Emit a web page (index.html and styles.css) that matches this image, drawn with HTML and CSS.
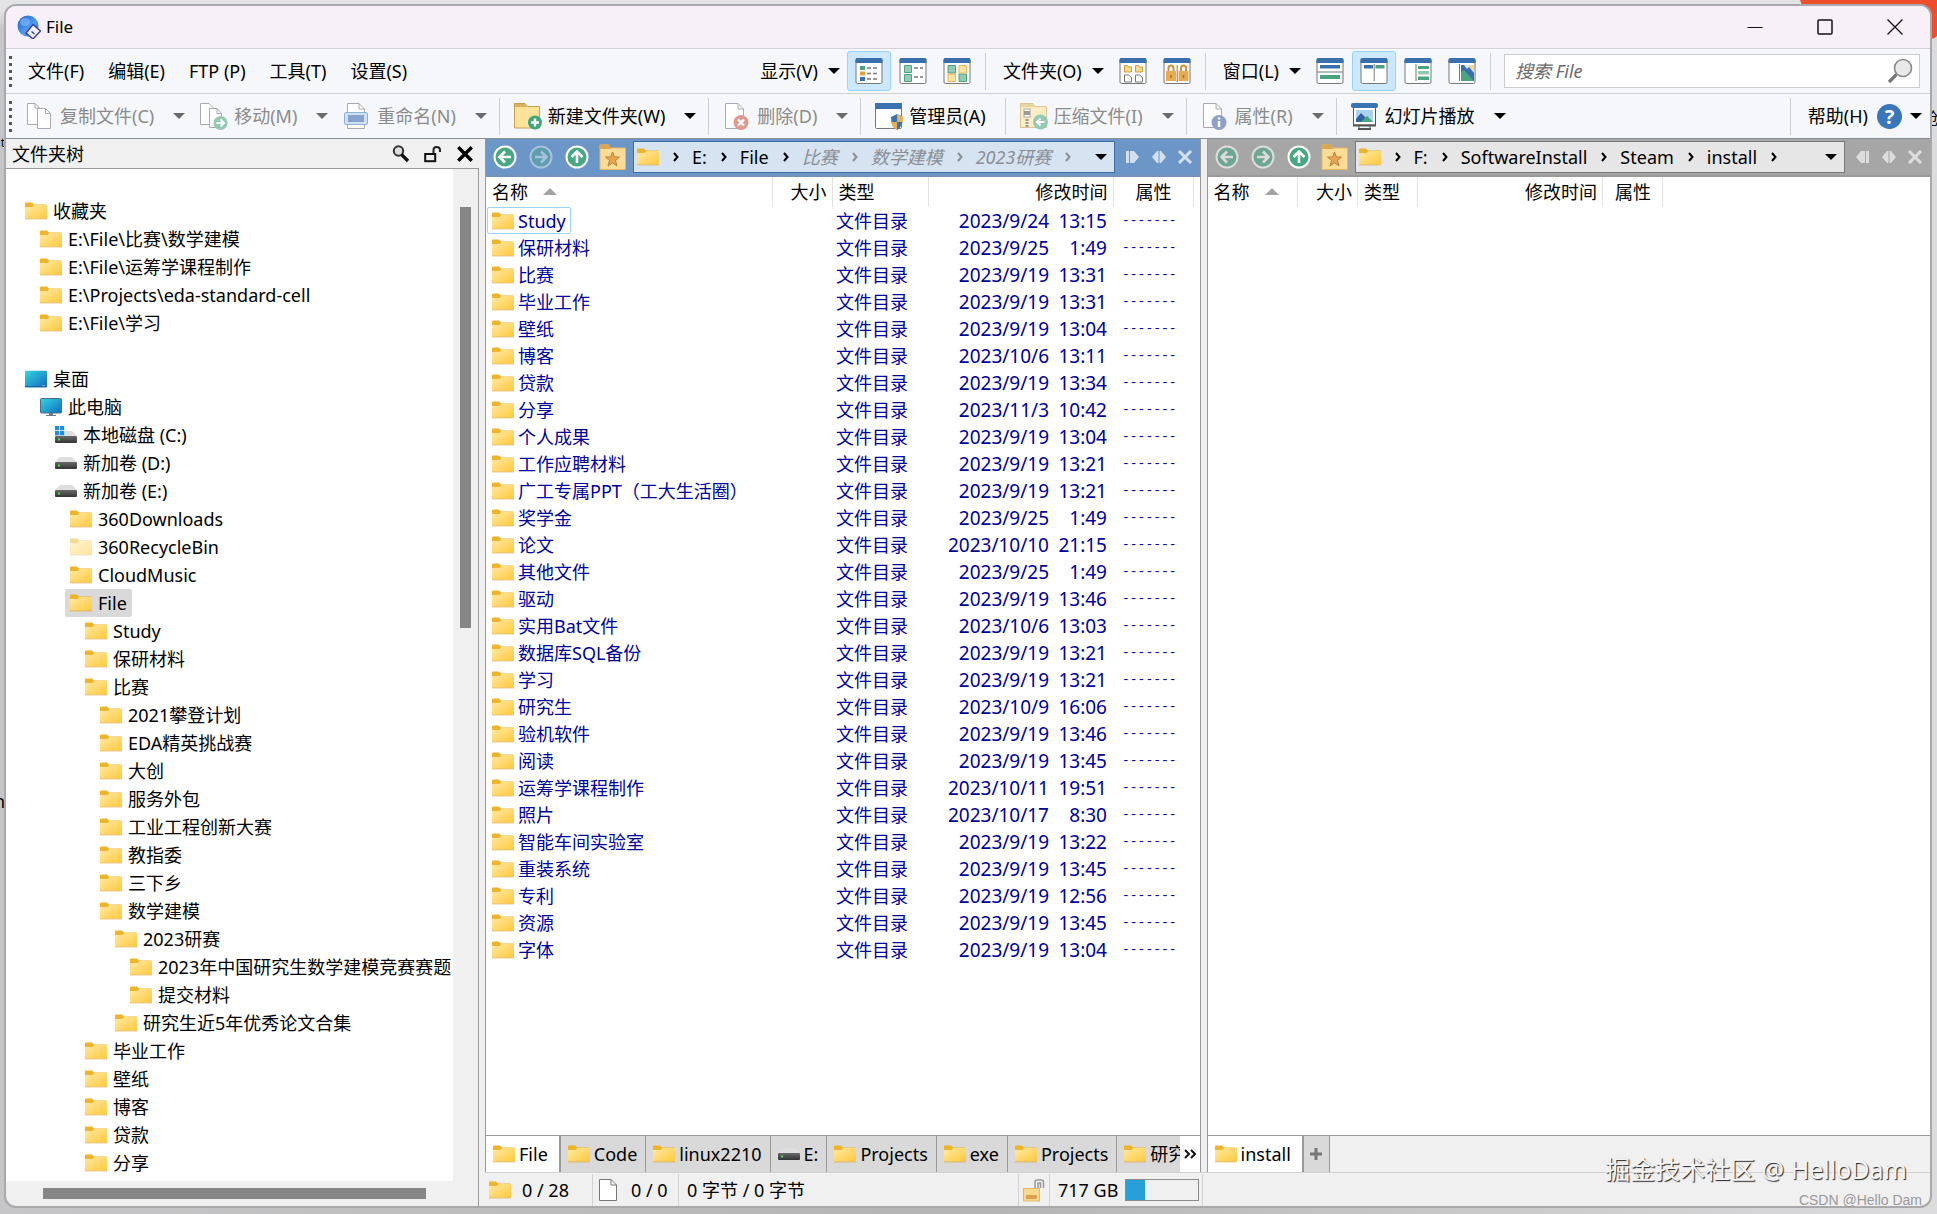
FILE: index.html
```html
<!DOCTYPE html>
<html lang="zh-CN">
<head>
<meta charset="UTF-8">
<meta name="viewport" content="width=device-width, initial-scale=1.0">
<title>File</title>
<link rel="stylesheet" href="styles.css">
</head>
<body>

  <!-- Icon sprites -->
  <svg class="sprites" aria-hidden="true">
    <defs>
      <linearGradient id="gFolder" x1="0" y1="0" x2="1" y2="1">
        <stop offset="0" stop-color="#ffe9a6"/><stop offset="1" stop-color="#ffca3a"/>
      </linearGradient>
      <linearGradient id="gDesk" x1="0" y1="0" x2="1" y2="1">
        <stop offset="0" stop-color="#35d6dc"/><stop offset="1" stop-color="#0f6cc4"/>
      </linearGradient>
      <linearGradient id="gApp" x1="0" y1="0" x2="1" y2="1">
        <stop offset="0" stop-color="#1c5fc4"/><stop offset="0.6" stop-color="#4fa0f0"/><stop offset="1" stop-color="#1b4fb0"/>
      </linearGradient>
      <linearGradient id="gDisk" x1="0" y1="0" x2="0" y2="1">
        <stop offset="0" stop-color="#6a6a6a"/><stop offset="1" stop-color="#333"/>
      </linearGradient>
    </defs>
    <symbol id="folder" viewBox="0 0 22 18">
      <path d="M0 1.5Q0 .5 1 .5H7L9 2.5H21Q22 2.5 22 3.5V8H0Z" fill="#f0b429"/>
      <path d="M0 5H7.5L9.5 3H22V16.5H0Z" fill="url(#gFolder)"/>
      <path d="M0 16.5H22V17.3H0Z" fill="#e3a93a"/>
    </symbol>
    <symbol id="desktop" viewBox="0 0 24 18">
      <rect width="24" height="18" rx="1" fill="url(#gDesk)"/>
      <path d="M0 17H24V18H0Z" fill="#0b4f94"/><path d="M19 16.5h1M21 16.5h1" stroke="#fff"/>
    </symbol>
    <symbol id="computer" viewBox="0 0 22 18">
      <rect x=".5" y=".5" width="21" height="14.5" rx="1" fill="url(#gDesk)" stroke="#4b6f86"/>
      <path d="M9 15h4v2h3v1H6v-1h3z" fill="#6c7a86"/>
    </symbol>
    <symbol id="disk" viewBox="0 0 22 18">
      <path d="M5 3H17L22 8H0Z" fill="#dfdfdf"/>
      <rect y="8" width="22" height="7" rx="1" fill="url(#gDisk)"/>
      <rect x="3" y="10.5" width="2" height="2" fill="#4be04b"/>
    </symbol>
    <symbol id="sysdisk" viewBox="0 0 22 18">
      <path d="M5 5H17L22 10H0Z" fill="#dfdfdf"/>
      <rect y="10" width="22" height="7" rx="1" fill="url(#gDisk)"/>
      <rect x="3" y="12.5" width="2" height="2" fill="#4be04b"/>
      <path d="M0 0h4.200v4.200H0zM5 0h4.200v4.200H5zM0 5h4.200v4.200H0zM5 5h4.200v4.200H5z" fill="#1f8fdb"/>
    </symbol>
    <symbol id="page" viewBox="0 0 18 22">
      <path d="M.5 .5H12L17.500 6V21.500H.5Z" fill="#fff" stroke="#777"/>
      <path d="M12 .5V6H17.500" fill="none" stroke="#777"/>
    </symbol>
    <symbol id="app" viewBox="0 0 24 24">
      <ellipse cx="11" cy="11" rx="10.500" ry="10.500" fill="url(#gApp)"/>
      <ellipse cx="8" cy="7" rx="5" ry="4" fill="#8cc6ff" opacity=".55"/>
      <path d="M16 9.500L23.500 16L16 24L9 18Z" fill="#f2f2ff" stroke="#3c3f9c" stroke-width="1.500"/>
      <path d="M14.500 16.500l3 2.500" stroke="#3c3f9c" stroke-width="1.500"/>
    </symbol>
    <symbol id="copy" viewBox="0 0 28 28">
      <path d="M1.500 1.500H9L13.500 6V22.500H1.500Z" fill="#fff" stroke="#aaa"/>
      <path d="M11.500 6.500H19.500L24.500 11.500V26.500H11.500Z" fill="#fff" stroke="#aaa"/>
      <path d="M9 1.500V6H13M19.500 6.500V11.500H24.500" fill="none" stroke="#aaa"/>
    </symbol>
    <symbol id="move" viewBox="0 0 28 28">
      <path d="M.5 1.500H9L13.500 6V22.500H.5Z" fill="#fff" stroke="#aaa"/>
      <path d="M9.500 6.500H17L21.500 11.500V25.500H9.500Z" fill="#fff" stroke="#aaa"/>
      <path d="M17 6.500V11.500H21.500" fill="none" stroke="#aaa"/>
      <circle cx="20.500" cy="21" r="7" fill="#94c9b2"/>
      <path d="M16.500 21h7M20.500 17.500l3.500 3.500l-3.500 3.500" fill="none" stroke="#fff" stroke-width="2"/>
    </symbol>
    <symbol id="rename" viewBox="0 0 28 28">
      <path d="M4.500 1.500H16L21.500 7V26.500H4.500Z" fill="#fff" stroke="#aaa"/>
      <path d="M16 1.500V7H21.500" fill="none" stroke="#aaa"/>
      <rect x="1.500" y="10.500" width="23" height="12" rx="1.500" fill="#cfe0f3" stroke="#8db2d8"/>
      <rect x="5" y="13" width="16" height="7" fill="#86a3cc"/>
    </symbol>
    <symbol id="newfolder" viewBox="0 0 28 28">
      <path d="M.5 1.500H11L13 4.500H25.500V26H.5Z" fill="#fde49a" stroke="#c9a050"/>
      <path d="M1 2H11L13 5H1Z" fill="#dcb160"/>
      <circle cx="21" cy="20.500" r="7" fill="#3fa67c"/>
      <path d="M21 16.500v8M17 20.500h8" stroke="#fff" stroke-width="2.400"/>
    </symbol>
    <symbol id="delete" viewBox="0 0 28 28">
      <path d="M2.500 1.500H15L20.500 7V26.500H2.500Z" fill="#fff" stroke="#aaa"/>
      <path d="M15 1.500V7H20.500" fill="none" stroke="#aaa"/>
      <circle cx="18" cy="20.500" r="7.500" fill="#dd9a90"/>
      <path d="M15 17.500l6 6M21 17.500l-6 6" stroke="#fff" stroke-width="2.400"/>
    </symbol>
    <symbol id="admin" viewBox="0 0 28 28">
      <rect x=".5" y="1.500" width="26" height="25" rx="1" fill="#fff" stroke="#777"/>
      <path d="M0 1H27V7H0Z" fill="#3a72b4"/>
      <path d="M22 12L28 15Q28 25 22 28Q16 25 16 15Z" fill="#3a72b4"/>
      <path d="M22 12L28 15V20H22ZM16 20H22V28Q17 25 16 20Z" fill="#e8b04e"/>
    </symbol>
    <symbol id="zip" viewBox="0 0 28 28">
      <path d="M.5 1.500H13L15 4.500H26.500V25.500H.5Z" fill="#fbecc5" stroke="#dcc594"/>
      <path d="M1 2H13L15 5H1Z" fill="#ebd3a0"/>
      <rect x="4" y="7" width="6" height="8" fill="#fff" stroke="#aaa"/><rect x="4" y="9" width="6" height="4" fill="#999"/>
      <path d="M7 17v8" stroke="#999" stroke-width="3" stroke-dasharray="2 1"/>
      <circle cx="20.500" cy="20" r="7.500" fill="#94c9b2"/>
      <path d="M24.500 20h-7M20.500 16.500l-3.500 3.500l3.500 3.500" fill="none" stroke="#fff" stroke-width="2"/>
    </symbol>
    <symbol id="props" viewBox="0 0 28 28">
      <path d="M2.500 1.500H15L20.500 7V25.500H2.500Z" fill="#fff" stroke="#aaa"/>
      <path d="M15 1.500V7H20.500" fill="none" stroke="#aaa"/>
      <circle cx="18" cy="20.500" r="7.500" fill="#8f9fcb"/>
      <path d="M18 19v6M18 15.500v2" stroke="#fff" stroke-width="2.400"/>
    </symbol>
    <symbol id="slides" viewBox="0 0 28 28">
      <rect x="2.500" y="4" width="22" height="19" fill="#fff" stroke="#555"/>
      <rect y="1" width="27" height="5" rx="2" fill="#3a72b4"/>
      <path d="M5 8H22V20H5Z" fill="#a9d3f0"/><path d="M5 17L10 11L16 17V20H5Z" fill="#2f62a5"/>
      <path d="M10 20L16 14L22 20Z" fill="#4aa57e"/>
      <path d="M2 23.500H25M7 27H20" stroke="#555" stroke-width="2"/><path d="M8 24v3M19 24v3" stroke="#555"/>
    </symbol>
    <symbol id="v-details" viewBox="0 0 28 26">
      <use href="#frame"/>
      <path d="M5 8h5v4H5z" fill="#4aa57e"/><path d="M5 13.500h5v4H5z" fill="#e2a144"/><path d="M5 19h5v4H5z" fill="#3a72b4"/>
      <path d="M12 10h4M18 10h4M12 15.500h4M18 15.500h4M12 21h4M18 21h4" stroke="#777" stroke-width="1.500"/>
    </symbol>
    <symbol id="v-tiles" viewBox="0 0 28 26">
      <use href="#frame"/>
      <path d="M5.500 7.500h7v7h-7zM5.500 16.500h7v7h-7z" fill="#9acdb5" stroke="#4aa57e"/>
      <path d="M15 10h4M21 10h3M15 19h4M21 19h3" stroke="#777" stroke-width="1.500"/>
    </symbol>
    <symbol id="v-thumbs" viewBox="0 0 28 26">
      <use href="#frame"/>
      <path d="M5 7.500h7.500v7.500H5zM16 16h7.500v7.500H16z" fill="#8fcbb0" stroke="#4aa57e"/>
      <path d="M16 7.500h7.500v7.500H16zM5 16h7.500v7.500H5z" fill="#fde3a0" stroke="#e6b65e"/>
    </symbol>
    <symbol id="frame" viewBox="0 0 28 26" width="28" height="26">
      <rect x="1" y=".5" width="26" height="25" rx="1.500" fill="#fff" stroke="#777"/>
      <path d="M.5 2Q.5 0 2.500 0H25.500Q27.500 0 27.500 2V5H.5Z" fill="#3a6fae"/>
    </symbol>
    <symbol id="f-formats" viewBox="0 0 28 26">
      <use href="#frame"/>
      <path d="M5.500 7.500h3l1 1.500h3v5h-7zM16.500 7.500h3l1 1.500h3v5h-7z" fill="#fbd98a" stroke="#d59a3c"/>
      <path d="M5.500 17h4l3 2.500v4.500h-7zM16.500 17h4l3 2.500v4.500h-7z" fill="#fff" stroke="#777"/>
    </symbol>
    <symbol id="f-lock" viewBox="0 0 28 26">
      <use href="#frame"/>
      <path d="M5.500 13V10Q5.500 7.500 8 7.500Q10.500 7.500 10.500 10V13M18 13V10Q18 7.500 20.500 7.500Q23 7.500 23 10V13" fill="none" stroke="#d2913a" stroke-width="2"/>
      <path d="M3 13h10v10H3zM15.500 13h10v10h-10z" fill="#e8ac50"/><path d="M14.200 7v17" stroke="#777"/>
      <path d="M8 17v3M20.500 17v3" stroke="#a8702a" stroke-width="1.500"/>
    </symbol>
    <symbol id="w-horiz" viewBox="0 0 28 26">
      <use href="#frame"/>
      <path d="M4 7h20v3.500H4z" fill="#3a6fae"/><path d="M4 17h20v4H4z" fill="#4aa57e"/><path d="M1 14h26" stroke="#777"/>
    </symbol>
    <symbol id="w-vert" viewBox="0 0 28 26">
      <use href="#frame"/>
      <path d="M4 7h9v3.500H4z" fill="#3a6fae"/><path d="M15.500 7h9v3.500h-9z" fill="#4aa57e"/><path d="M14.200 6v17" stroke="#777"/>
    </symbol>
    <symbol id="w-tree" viewBox="0 0 28 26">
      <use href="#frame"/>
      <path d="M12 6v17" stroke="#777"/><path d="M14 8h11v3H14zM14 18.500h11v3.500H14z" fill="#4aa57e"/><path d="M14 13h11v3.500H14z" fill="#8fcbb0"/>
    </symbol>
    <symbol id="w-preview" viewBox="0 0 28 26">
      <use href="#frame"/>
      <path d="M11.500 6v17" stroke="#777"/><path d="M13 7h13v16H13z" fill="#d5e8f5"/>
      <path d="M21 7h5v5h-5z" fill="#f7d98c"/><path d="M13 7h3l3 4l2-2l5 6v8H13z" fill="#3a6fae"/><path d="M13 14l3-2L26 23H13z" fill="#4aa57e"/>
    </symbol>
    <symbol id="nav-back" viewBox="0 0 24 24">
      <circle cx="12" cy="12" r="10.500" fill="#48a884" stroke="#fff" stroke-width="2"/>
      <path d="M18 12H7M12 6.500L6.500 12L12 17.500" fill="none" stroke="#fff" stroke-width="2.600"/>
    </symbol>
    <symbol id="nav-forward" viewBox="0 0 24 24">
      <circle cx="12" cy="12" r="10.500" fill="#48a884" stroke="#fff" stroke-width="2"/>
      <path d="M6 12H17M12 6.500L17.500 12L12 17.500" fill="none" stroke="#fff" stroke-width="2.600"/>
    </symbol>
    <symbol id="nav-up" viewBox="0 0 24 24">
      <circle cx="12" cy="12" r="10.500" fill="#48a884" stroke="#fff" stroke-width="2"/>
      <path d="M12 18V7M6.500 12L12 6.500L17.500 12" fill="none" stroke="#fff" stroke-width="2.600"/>
    </symbol>
    <symbol id="favorite" viewBox="0 0 26 26">
      <path d="M.5 1H9L11 4H26V25.500H.5Z" fill="#fbdc96" stroke="#e2b667"/>
      <path d="M0 .5H9.500L12 5H0Z" fill="#dba851"/>
      <path d="M13 8L15 13H20L16 16.500L17.500 22L13 18.800L8.500 22L10 16.500L6 13H11Z" fill="#e8a54c" stroke="#b88040"/>
    </symbol>
    <symbol id="chevron" viewBox="0 0 6 10">
      <path d="M1 1L4.500 5L1 9" fill="none" stroke="currentColor" stroke-width="2"/>
    </symbol>
    <symbol id="pane-right" viewBox="0 0 14 12">
      <path d="M0 0h3v12H0zM4 0h4l5 6l-5 6H4z" fill="currentColor"/>
    </symbol>
    <symbol id="pane-left" viewBox="0 0 14 12">
      <path d="M10 0h3v12h-3zM9 0H5L0 6l5 6h4z" fill="currentColor"/>
    </symbol>
    <symbol id="pane-both" viewBox="0 0 14 12">
      <path d="M6.500 0v12H5L0 6l5-6zM7.500 0v12H9l5-6l-5-6z" fill="currentColor"/>
    </symbol>
    <symbol id="cross" viewBox="0 0 16 14">
      <path d="M2 1L14 13M14 1L2 13" stroke="currentColor" stroke-width="3"/>
    </symbol>
    <symbol id="magnifier" viewBox="0 0 26 26">
      <circle cx="16" cy="10" r="8.500" fill="#e9e9e9" stroke="#888" stroke-width="1.600"/>
      <path d="M9.500 16.500L2 24" stroke="#777" stroke-width="3.200"/>
    </symbol>
    <symbol id="find" viewBox="0 0 18 18">
      <circle cx="6.500" cy="6" r="4.700" fill="#ddd" stroke="#333" stroke-width="2"/>
      <path d="M9.500 9.500L16 16" stroke="#111" stroke-width="3.200"/>
    </symbol>
    <symbol id="unlock" viewBox="0 0 18 18">
      <rect x="1.200" y="9" width="10" height="7.200" fill="#eee" stroke="#111" stroke-width="2"/>
      <path d="M9.500 8V5Q9.500 2 12.500 2Q16 2 16 5V7" fill="none" stroke="#222" stroke-width="2"/>
    </symbol>
    <symbol id="padlock" viewBox="0 0 22 24">
      <path d="M12 11V4Q12 2 14 2H18Q20.500 2 20.500 4V10M15 11V5H17.500V10" fill="none" stroke="#999" stroke-width="1.500"/>
      <rect x=".5" y="10.500" width="16" height="12.500" fill="#fbd98a" stroke="#e3b766"/>
      <rect x="3" y="17" width="11" height="4" fill="#dca050"/>
    </symbol>
  </svg>

  <!-- Desktop behind the window -->
  <div class="backdrop" aria-hidden="true">
    <svg class="blob" viewBox="0 0 137 40"><path d="M0 0H137V36Q130 44 120 30L4 10Z" fill="#ee4e2b"/></svg>
    <span class="scrap scrap-a">at</span>
    <span class="scrap scrap-b">h</span>
    <span class="scrap scrap-c">创</span>
  </div>

  <div class="window">
    <header class="titlebar">
      <svg class="app-icon"><use href="#app"/></svg>
      <h1>File</h1>
      <div class="caption-buttons">
        <button aria-label="最小化"><svg viewBox="0 0 16 16"><path d="M.5 8.500H15.500" stroke="#111"/></svg></button>
        <button aria-label="最大化"><svg viewBox="0 0 16 16"><rect x="1" y="1" width="14" height="14" rx="1" fill="none" stroke="#111" stroke-width="1.500"/></svg></button>
        <button aria-label="关闭"><svg viewBox="0 0 16 16"><path d="M.5 .5L15.500 15.500M15.500 .5L.5 15.500" stroke="#111" stroke-width="1.300"/></svg></button>
      </div>
    </header>

    <nav class="bar menubar">
      <span class="grip"></span>
      <button class="menu">文件(F)</button>
      <button class="menu">编辑(E)</button>
      <button class="menu">FTP (P)</button>
      <button class="menu">工具(T)</button>
      <button class="menu">设置(S)</button>
      <div class="view-tools">
        <button class="tool">显示(V)</button><button class="drop" aria-label="显示"></button>
        <button class="view active" aria-label="详细信息"><svg><use href="#v-details"/></svg></button>
        <button class="view" aria-label="平铺"><svg><use href="#v-tiles"/></svg></button>
        <button class="view" aria-label="缩略图"><svg><use href="#v-thumbs"/></svg></button>
        <span class="sep"></span>
        <button class="tool">文件夹(O)</button><button class="drop" aria-label="文件夹"></button>
        <button class="view" aria-label="文件夹格式"><svg><use href="#f-formats"/></svg></button>
        <button class="view" aria-label="锁定格式"><svg><use href="#f-lock"/></svg></button>
        <span class="sep"></span>
        <button class="tool">窗口(L)</button><button class="drop" aria-label="窗口"></button>
        <button class="view" aria-label="水平双窗"><svg><use href="#w-horiz"/></svg></button>
        <button class="view active" aria-label="垂直双窗"><svg><use href="#w-vert"/></svg></button>
        <button class="view" aria-label="文件夹树"><svg><use href="#w-tree"/></svg></button>
        <button class="view" aria-label="预览"><svg><use href="#w-preview"/></svg></button>
        <span class="sep"></span>
      </div>
      <label class="search">
        <input type="text" placeholder="搜索 File" aria-label="搜索">
        <svg><use href="#magnifier"/></svg>
      </label>
    </nav>

    <div class="bar toolbar">
      <span class="grip"></span>
      <button class="tool" disabled><svg><use href="#copy"/></svg>复制文件(C)</button><button class="drop" disabled aria-label="复制"></button>
      <button class="tool next" disabled><svg><use href="#move"/></svg>移动(M)</button><button class="drop" disabled aria-label="移动"></button>
      <button class="tool next" disabled><svg><use href="#rename"/></svg>重命名(N)</button><button class="drop" disabled aria-label="重命名"></button>
      <span class="sep"></span>
      <button class="tool"><svg><use href="#newfolder"/></svg>新建文件夹(W)</button><button class="drop" aria-label="新建"></button>
      <span class="sep"></span>
      <button class="tool" disabled><svg><use href="#delete"/></svg>删除(D)</button><button class="drop" disabled aria-label="删除"></button>
      <span class="sep"></span>
      <button class="tool single"><svg><use href="#admin"/></svg>管理员(A)</button>
      <span class="sep"></span>
      <button class="tool" disabled><svg><use href="#zip"/></svg>压缩文件(I)</button><button class="drop" disabled aria-label="压缩"></button>
      <span class="sep"></span>
      <button class="tool" disabled><svg><use href="#props"/></svg>属性(R)</button><button class="drop" disabled aria-label="属性"></button>
      <span class="sep"></span>
      <button class="tool"><svg><use href="#slides"/></svg>幻灯片播放</button><button class="drop" aria-label="幻灯片"></button>
      <div class="help">
        <span class="sep"></span>
        <button class="tool">帮助(H)<span class="question">?</span></button><button class="drop" aria-label="帮助"></button>
      </div>
    </div>

    <main class="workspace">
      <!-- Folder tree -->
      <aside class="tree-panel">
        <div class="tree-head">
          <h2>文件夹树</h2>
          <button aria-label="查找"><svg><use href="#find"/></svg></button>
          <button aria-label="锁定"><svg><use href="#unlock"/></svg></button>
          <button aria-label="关闭"><svg><use href="#cross"/></svg></button>
        </div>
        <div class="tree-body">
          <ul id="tree" class="tree"></ul>
          <div class="vscroll"><span></span></div>
          <div class="hscroll"><span></span></div>
        </div>
      </aside>

      <div class="panes">
        <!-- Source pane -->
        <section class="pane source">
          <div class="address">
            <button class="nav" aria-label="后退"><svg><use href="#nav-back"/></svg></button>
            <button class="nav" disabled aria-label="前进"><svg><use href="#nav-forward"/></svg></button>
            <button class="nav" aria-label="向上"><svg><use href="#nav-up"/></svg></button>
            <button class="nav fav" aria-label="收藏夹"><svg><use href="#favorite"/></svg></button>
            <div class="crumbs">
              <svg class="ico"><use href="#folder"/></svg>
              <svg class="chev"><use href="#chevron"/></svg><a href="#">E:</a>
              <svg class="chev"><use href="#chevron"/></svg><a href="#">File</a>
              <svg class="chev"><use href="#chevron"/></svg><a href="#" class="ghost">比赛</a>
              <svg class="chev ghost"><use href="#chevron"/></svg><a href="#" class="ghost">数学建模</a>
              <svg class="chev ghost"><use href="#chevron"/></svg><a href="#" class="ghost">2023研赛</a>
              <svg class="chev ghost"><use href="#chevron"/></svg>
              <button class="drop" aria-label="历史"></button>
            </div>
            <button class="mini" aria-label="移到右侧"><svg><use href="#pane-right"/></svg></button>
            <button class="mini" aria-label="交换"><svg><use href="#pane-both"/></svg></button>
            <button class="mini" aria-label="关闭窗格"><svg class="close"><use href="#cross"/></svg></button>
          </div>
          <div class="list">
            <table id="files">
              <colgroup><col class="c-name"><col class="c-size"><col class="c-type"><col class="c-time"><col class="c-attr"><col></colgroup>
              <thead>
                <tr><th>名称<i class="sort"></i></th><th class="right">大小</th><th>类型</th><th class="right">修改时间</th><th class="center">属性</th><th></th></tr>
              </thead>
              <tbody>
              </tbody>
            </table>
          </div>
          <div class="tabs">
            <button class="tab current"><svg class="ico"><use href="#folder"/></svg>File</button>
            <button class="tab"><svg class="ico"><use href="#folder"/></svg>Code</button>
            <button class="tab"><svg class="ico"><use href="#folder"/></svg>linux2210</button>
            <button class="tab"><svg class="ico"><use href="#disk"/></svg>E:</button>
            <button class="tab"><svg class="ico"><use href="#folder"/></svg>Projects</button>
            <button class="tab"><svg class="ico"><use href="#folder"/></svg>exe</button>
            <button class="tab"><svg class="ico"><use href="#folder"/></svg>Projects</button>
            <button class="tab cut"><svg class="ico"><use href="#folder"/></svg>研究生</button>
            <button class="more" aria-label="更多标签">
              <svg viewBox="0 0 12 10"><path d="M1 1L5 5L1 9M7 1L11 5L7 9" fill="none" stroke="#111" stroke-width="2"/></svg>
            </button>
          </div>
        </section>

        <!-- Destination pane -->
        <section class="pane dest">
          <div class="address">
            <button class="nav" disabled aria-label="后退"><svg><use href="#nav-back"/></svg></button>
            <button class="nav" disabled aria-label="前进"><svg><use href="#nav-forward"/></svg></button>
            <button class="nav" aria-label="向上"><svg><use href="#nav-up"/></svg></button>
            <button class="nav fav" aria-label="收藏夹"><svg><use href="#favorite"/></svg></button>
            <div class="crumbs">
              <svg class="ico"><use href="#folder"/></svg>
              <svg class="chev"><use href="#chevron"/></svg><a href="#">F:</a>
              <svg class="chev"><use href="#chevron"/></svg><a href="#">SoftwareInstall</a>
              <svg class="chev"><use href="#chevron"/></svg><a href="#">Steam</a>
              <svg class="chev"><use href="#chevron"/></svg><a href="#">install</a>
              <svg class="chev"><use href="#chevron"/></svg>
              <button class="drop" aria-label="历史"></button>
            </div>
            <button class="mini" aria-label="移到左侧"><svg><use href="#pane-left"/></svg></button>
            <button class="mini" aria-label="交换"><svg><use href="#pane-both"/></svg></button>
            <button class="mini" aria-label="关闭窗格"><svg class="close"><use href="#cross"/></svg></button>
          </div>
          <div class="list">
            <table>
              <colgroup><col class="c-name"><col class="c-size"><col class="c-type"><col class="c-time"><col class="c-attr"><col></colgroup>
              <thead>
                <tr><th>名称<i class="sort"></i></th><th class="right">大小</th><th>类型</th><th class="right">修改时间</th><th class="center">属性</th><th></th></tr>
              </thead>
            </table>
          </div>
          <div class="tabs">
            <button class="tab current"><svg class="ico"><use href="#folder"/></svg>install</button>
            <button class="add" aria-label="新标签"><svg viewBox="0 0 12 12"><path d="M6 0V12M0 6H12" stroke="#777" stroke-width="3"/></svg></button>
          </div>
        </section>

        <footer class="status">
          <span class="cell folders"><svg class="ico"><use href="#folder"/></svg>0 / 28</span>
          <span class="cell pages"><svg><use href="#page"/></svg>0 / 0</span>
          <span class="cell bytes">0 字节 / 0 字节</span>
          <span class="cell lock"><svg><use href="#padlock"/></svg></span>
          <label class="cell disk">717 GB <progress value="26" max="100"></progress></label>
        </footer>
      </div>
    </main>
  </div>

  <div class="watermark">
    <p class="mark-main">掘金技术社区 @ HelloDam</p>
    <p class="mark-sub">CSDN @Hello Dam</p>
  </div>

  <script>
  // [level, icon, label]
  var tree = [
    [0, 'folder', '收藏夹'],
    [1, 'folder', 'E:\\File\\比赛\\数学建模'],
    [1, 'folder', 'E:\\File\\运筹学课程制作'],
    [1, 'folder', 'E:\\Projects\\eda-standard-cell'],
    [1, 'folder', 'E:\\File\\学习'],
    null,
    [0, 'desktop', '桌面'],
    [1, 'computer', '此电脑'],
    [2, 'sysdisk', '本地磁盘 (C:)'],
    [2, 'disk', '新加卷 (D:)'],
    [2, 'disk', '新加卷 (E:)'],
    [3, 'folder', '360Downloads'],
    [3, 'folder', '360RecycleBin', 'hidden-item'],
    [3, 'folder', 'CloudMusic'],
    [3, 'folder', 'File', 'selected'],
    [4, 'folder', 'Study'],
    [4, 'folder', '保研材料'],
    [4, 'folder', '比赛'],
    [5, 'folder', '2021攀登计划'],
    [5, 'folder', 'EDA精英挑战赛'],
    [5, 'folder', '大创'],
    [5, 'folder', '服务外包'],
    [5, 'folder', '工业工程创新大赛'],
    [5, 'folder', '教指委'],
    [5, 'folder', '三下乡'],
    [5, 'folder', '数学建模'],
    [6, 'folder', '2023研赛'],
    [7, 'folder', '2023年中国研究生数学建模竞赛赛题'],
    [7, 'folder', '提交材料'],
    [6, 'folder', '研究生近5年优秀论文合集'],
    [4, 'folder', '毕业工作'],
    [4, 'folder', '壁纸'],
    [4, 'folder', '博客'],
    [4, 'folder', '贷款'],
    [4, 'folder', '分享']
  ];

  var files = [
    ['Study', '2023/9/24', '13:15'],
    ['保研材料', '2023/9/25', '1:49'],
    ['比赛', '2023/9/19', '13:31'],
    ['毕业工作', '2023/9/19', '13:31'],
    ['壁纸', '2023/9/19', '13:04'],
    ['博客', '2023/10/6', '13:11'],
    ['贷款', '2023/9/19', '13:34'],
    ['分享', '2023/11/3', '10:42'],
    ['个人成果', '2023/9/19', '13:04'],
    ['工作应聘材料', '2023/9/19', '13:21'],
    ['广工专属PPT（工大生活圈）', '2023/9/19', '13:21'],
    ['奖学金', '2023/9/25', '1:49'],
    ['论文', '2023/10/10', '21:15'],
    ['其他文件', '2023/9/25', '1:49'],
    ['驱动', '2023/9/19', '13:46'],
    ['实用Bat文件', '2023/10/6', '13:03'],
    ['数据库SQL备份', '2023/9/19', '13:21'],
    ['学习', '2023/9/19', '13:21'],
    ['研究生', '2023/10/9', '16:06'],
    ['验机软件', '2023/9/19', '13:46'],
    ['阅读', '2023/9/19', '13:45'],
    ['运筹学课程制作', '2023/10/11', '19:51'],
    ['照片', '2023/10/17', '8:30'],
    ['智能车间实验室', '2023/9/19', '13:22'],
    ['重装系统', '2023/9/19', '13:45'],
    ['专利', '2023/9/19', '12:56'],
    ['资源', '2023/9/19', '13:45'],
    ['字体', '2023/9/19', '13:04']
  ];

  document.getElementById('tree').innerHTML = tree.map(function(item) {
    if (!item) return '<li></li>';
    return '<li style="padding-left:' + item[0] * 15 + 'px"><span class="node ' + (item[3] || '') + '">' +
      '<svg class="ico"><use href="#' + item[1] + '"/></svg>' + item[2] + '</span></li>';
  }).join('');

  document.querySelector('#files tbody').innerHTML = files.map(function(f, i) {
    return '<tr><td><span class="entry' + (i === 0 ? ' focused' : '') + '"><svg class="ico"><use href="#folder"/></svg>' + f[0] + '</span></td>' +
      '<td></td><td>文件目录</td><td class="right time">' + f[1] + '<span class="clock">' + f[2] + '</span></td><td class="attrs">-------</td><td></td></tr>';
  }).join('');
  </script>

</body>
</html>
```
FILE: styles.css
```css
* {
  box-sizing: border-box;
}

body {
  margin: 0;
  height: 100vh;
  padding: 4px 5px 6px 4px;
  overflow: hidden;
  background: linear-gradient(90deg, #c6c6c8 0, #b4b4b4 50%, #dcdcde 100%);
  font-family: "Noto Sans", "Noto Sans CJK SC", sans-serif;
  font-size: 18px;
  line-height: 26px;
  color: #000;
}

button, input {
  font: inherit;
  color: inherit;
  border: 0;
  padding: 0;
  background: none;
}

button {
  display: flex;
  align-items: center;
  white-space: nowrap;
}

h1, h2, p, ul {
  margin: 0;
  padding: 0;
  font-size: inherit;
  font-weight: normal;
  list-style: none;
}

svg {
  flex: none;
  display: block;
}

a {
  color: inherit;
  text-decoration: none;
}

.sprites {
  position: absolute;
  width: 0;
  height: 0;
}

/* Desktop behind the window */
.backdrop {
  position: absolute;
  inset: 0;
  z-index: -1;
  overflow: hidden;
  background: linear-gradient(#e3e2e5 0, #e3e2e5 10px, transparent 30px);
}

.blob {
  position: absolute;
  top: 0;
  right: 0;
  width: 137px;
  height: 40px;
}

.scrap {
  position: absolute;
  left: -6px;
  font-size: 12px;
}

.scrap-a { top: 130px; }
.scrap-b { top: 788px; font-size: 18px; }
.scrap-c { top: 105px; left: auto; right: -7px; font-size: 16px; }

/* Window */
.window {
  display: flex;
  flex-direction: column;
  height: 100%;
  border: 2px solid #a9a9ac;
  border-radius: 12px;
  overflow: hidden;
  background: #f0f0f0;
}

.titlebar {
  display: flex;
  align-items: center;
  height: 43px;
  padding: 0 0 1px 11px;
  background: #f7f0f8;
  border-bottom: 1px solid #d4d2d6;
}

.titlebar h1 {
  margin-left: 5px;
  font-size: 17px;
}

.app-icon {
  width: 24px;
  height: 24px;
}

.caption-buttons {
  display: flex;
  margin-left: auto;
}

.caption-buttons button {
  justify-content: center;
  width: 70px;
  height: 40px;
}

.caption-buttons svg {
  width: 16px;
  height: 16px;
}

/* Menu and tool bars */
.bar {
  display: flex;
  align-items: center;
  height: 45px;
  padding-right: 10px;
  background: #f5f7fa;
  border-bottom: 1px solid #cfd0d2;
}

.toolbar {
  padding-right: 8px;
  border-bottom-color: #8a8f94;
}

.grip {
  width: 3px;
  height: 31px;
  margin: 0 12px 0 3px;
  background: repeating-linear-gradient(#555 0, #555 3px, transparent 3px, transparent 7px);
}

.toolbar .grip {
  margin-right: 14px;
}

.menu {
  margin: 0 20px 0 4px;
}

.view-tools,
.help {
  display: flex;
  align-items: center;
  margin-left: auto;
}

.tool svg {
  width: 28px;
  height: 28px;
  margin-right: 6px;
}

.single {
  margin-right: 7px;
}

.next {
  margin-left: 15px;
}

.drop {
  width: 12px;
  height: 26px;
  margin-left: 19px;
  justify-content: center;
}

.drop::before {
  content: "";
  border: 6px solid transparent;
  border-top-color: #000;
  border-bottom: 0;
}

button:disabled {
  color: #8b8b8b;
}

.drop:disabled::before {
  border-top-color: #6a6a6a;
}

.sep {
  width: 1px;
  height: 37px;
  margin: 0 14px 0 12px;
  background: #cdced0;
}

.view-tools .drop {
  margin: 0 7px 0 10px;
}

.view-tools .sep {
  margin: 0 17px 0 6px;
}

.view-tools .sep:last-child {
  margin-right: 13px;
}

.view {
  justify-content: center;
  width: 44px;
  height: 40px;
  border: 1px solid transparent;
  border-radius: 3px;
}

.view svg {
  width: 28px;
  height: 26px;
}

.view.active {
  background: #cce8ff;
  border-color: #99d1ff;
}

.search {
  display: flex;
  align-items: center;
  width: 416px;
  height: 34px;
  padding: 0 6px 0 10px;
  background: #fff;
  border: 1px solid #ccc;
}

.search input {
  flex: 1;
  min-width: 0;
  outline: 0;
}

.search input::placeholder {
  color: #6a6a6a;
  font-style: italic;
}

.search svg {
  width: 26px;
  height: 26px;
}

.help .sep {
  margin-right: 17px;
}

.help .drop {
  margin-left: 8px;
}

.question {
  width: 25px;
  height: 25px;
  margin-left: 9px;
  border-radius: 50%;
  background: #3a76bb;
  color: #fff;
  font-size: 20px;
  font-weight: bold;
  line-height: 25px;
  text-align: center;
}

/* Workspace */
.workspace {
  display: flex;
  flex: 1;
  min-height: 0;
}

.tree-panel {
  display: flex;
  flex-direction: column;
  width: 479px;
}

.tree-head {
  display: flex;
  align-items: center;
  height: 30px;
  padding: 0 5px 0 6px;
  gap: 14px;
  border-bottom: 1px solid #999;
  margin-right: 6px;
}

.tree-head h2 {
  flex: 1;
}

.tree-head svg {
  width: 18px;
  height: 18px;
}

.tree-body {
  display: grid;
  grid-template-columns: 1fr 25px;
  grid-template-rows: 1fr 25px;
  flex: 1;
  min-height: 0;
  margin-right: 6px;
  border-right: 1px solid #999;
}

.tree {
  overflow: hidden;
  padding: 28px 0 0 14px;
  background: #fff;
}

.tree li {
  height: 28px;
}

.node {
  display: inline-flex;
  align-items: center;
  height: 28px;
  padding: 0 5px;
  gap: 6px;
  border-radius: 2px;
  white-space: nowrap;
}

.node.selected {
  background: #d9d9d9;
}

.hidden-item svg {
  opacity: 0.5;
}

.ico {
  width: 22px;
  height: 18px;
}

.vscroll {
  padding: 38px 7px 0;
}

.vscroll span {
  display: block;
  width: 11px;
  height: 421px;
  background: #868686;
}

.hscroll {
  padding: 7px 0 0 37px;
}

.hscroll span {
  display: block;
  width: 383px;
  height: 11px;
  background: #868686;
}

.panes {
  display: grid;
  grid-template-columns: 716fr 724fr;
  grid-template-rows: 1fr 34px;
  column-gap: 6px;
  flex: 1;
  min-width: 0;
}

.pane {
  display: flex;
  flex-direction: column;
  min-width: 0;
  min-height: 0;
  border-left: 1px solid #999;
}

.source {
  border-right: 1px solid #999;
}

.address {
  display: flex;
  align-items: center;
  height: 38px;
  padding: 0 2px 0 7px;
  background: #6c96c8;
  border-bottom: 2px solid #7292b8;
}

.dest .address {
  background: #a6a6a6;
  border-color: #9a9a9a;
}

.nav {
  margin-right: 12px;
}

.nav svg {
  width: 24px;
  height: 24px;
}

.nav:disabled svg {
  opacity: 0.4;
}

.dest .nav:disabled svg {
  opacity: 0.6;
}

.nav.fav {
  margin-right: 7px;
  margin-left: -2px;
}

.nav.fav svg {
  width: 27px;
  height: 26px;
}

.crumbs {
  display: flex;
  align-items: center;
  flex: 1;
  min-width: 0;
  height: 32px;
  padding: 0 7px 0 3px;
  margin-right: 5px;
  background: #d6e3f0;
  border: 1px solid #3f6ea5;
  white-space: nowrap;
}

.dest .crumbs {
  background: #e6e6e6;
  border-color: #777;
}

.chev {
  width: 6px;
  height: 10px;
  margin: 0 13px 0 14px;
}

.ghost {
  color: #8a8f96;
}

a.ghost {
  font-style: italic;
}

.crumbs .drop {
  margin-left: auto;
}

.mini {
  justify-content: center;
  width: 26px;
  color: #d3e0ef;
}

.dest .mini {
  color: #ddd;
}

.mini svg {
  width: 14px;
  height: 12px;
}

.mini .close {
  width: 16px;
  height: 14px;
}

/* File list */
.list {
  flex: 1;
  min-height: 0;
  background: #fff;
}

table {
  width: 100%;
  table-layout: fixed;
  border-collapse: collapse;
}

.c-name { width: 286px; }
.c-size { width: 60px; }
.c-type { width: 96px; }
.c-time { width: 185px; }
.c-attr { width: 80px; }

.dest .c-name { width: 90px; }
.dest .c-type { width: 60px; }
.dest .c-attr { width: 60px; }

th {
  height: 30px;
  padding: 0 5px 0 6px;
  border-right: 1px solid #e2e2e2;
  font-weight: normal;
  text-align: left;
  white-space: nowrap;
}

th:last-child {
  border-right: 0;
}

.sort {
  display: inline-block;
  margin: 0 0 4px 15px;
  border: 7px solid transparent;
  border-top: 0;
  border-bottom-color: #a3a3a3;
}

td {
  height: 27px;
  padding: 0 6px 0 4px;
  color: #00009a;
  white-space: nowrap;
}

td:first-child {
  padding: 0 0 0 1px;
}

.right {
  text-align: right;
}

.center {
  text-align: center;
}

.entry {
  display: inline-flex;
  align-items: center;
  height: 27px;
  padding: 0 4px;
  gap: 4px;
  border: 1px solid transparent;
  vertical-align: top;
}

.entry.focused {
  border-color: #99d1ff;
  border-radius: 2px;
}

.time {
  font-size: 19px;
}

.clock {
  display: inline-block;
  width: 58px;
}

td.attrs {
  padding: 0 0 0 9px;
  font-family: "Liberation Mono", monospace;
  font-size: 13px;
}

/* Folder tabs */
.tabs {
  display: flex;
  height: 37px;
  border-top: 1px solid #999;
}

.tab {
  gap: 4px;
  padding: 0 8px 0 7px;
  background: #d9d9d9;
  border-right: 1px solid #999;
}

.tab.current {
  background: #fff;
  padding-right: 11px;
  border-right: 2px solid #999;
}

.tab.cut {
  flex: 1;
  min-width: 0;
  overflow: hidden;
  border-right: 0;
}

.more {
  justify-content: center;
  width: 20px;
  background: #fff;
}

.more svg,
.add svg {
  width: 12px;
  height: 12px;
}

.add {
  justify-content: center;
  width: 26px;
  background: #d9d9d9;
  border-right: 1px solid #999;
}

/* Status bar */
.status {
  grid-column: 1 / -1;
  display: flex;
  align-items: center;
  border-top: 1px solid #d2d2d2;
}

.cell {
  display: flex;
  align-items: center;
  height: 32px;
  border-right: 1px solid #d2d2d2;
}

.folders {
  width: 108px;
  padding-left: 4px;
  gap: 11px;
}

.pages {
  width: 86px;
  padding-left: 6px;
  gap: 14px;
}

.pages svg {
  width: 18px;
  height: 22px;
}

.bytes {
  width: 340px;
  padding-left: 8px;
}

.lock {
  width: 31px;
  padding-left: 4px;
}

.lock svg {
  width: 22px;
  height: 24px;
}

.disk {
  padding: 0 3px 0 8px;
  gap: 7px;
}

progress {
  appearance: none;
  width: 74px;
  height: 22px;
  border: 1px solid #8b8b8b;
}

progress::-webkit-progress-bar {
  background: #f0f0f0;
}

progress::-webkit-progress-value {
  background: #27a0da;
}

/* Watermark over the lower right corner */
.watermark {
  position: absolute;
  right: 15px;
  bottom: 5px;
  text-align: right;
}

.mark-main {
  margin: 0 15px 6px 0;
  font-size: 25px;
  line-height: 32px;
  color: #f4f4f4;
  text-shadow: 1px 1px 1px #222;
}

.mark-sub {
  font-family: "Liberation Sans", sans-serif;
  font-size: 14px;
  line-height: 18px;
  color: #999;
}
```
